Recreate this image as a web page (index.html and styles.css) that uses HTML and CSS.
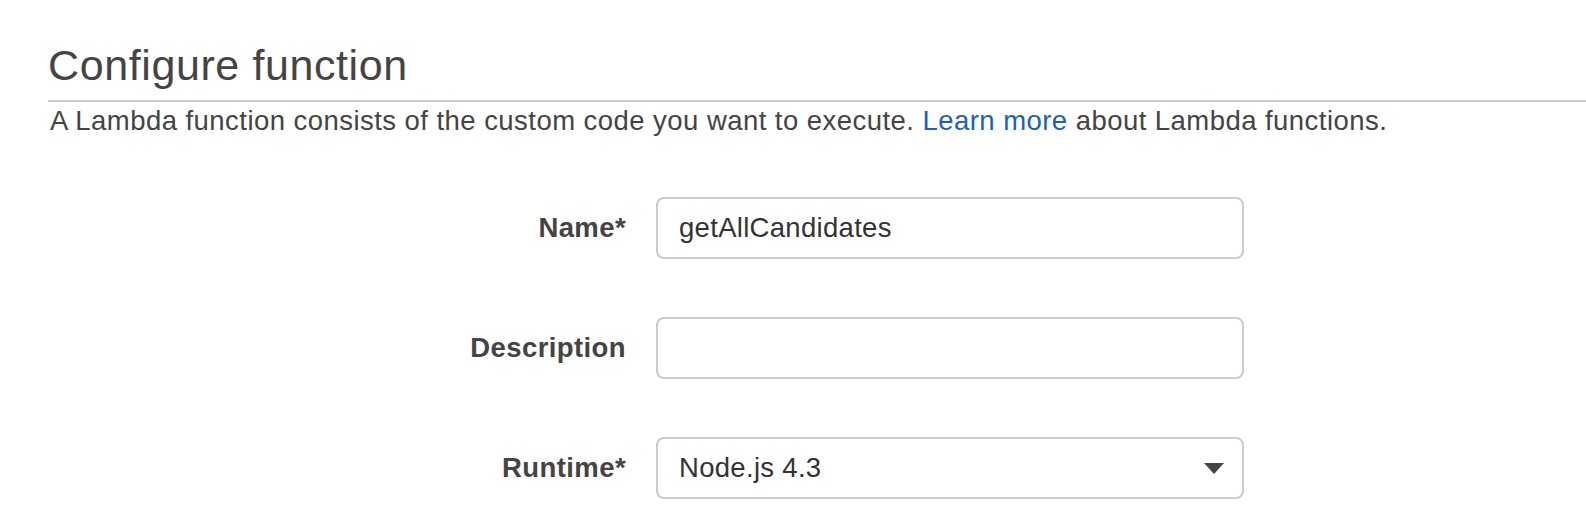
FILE: index.html
```html
<!DOCTYPE html>
<html lang="en">
<head>
<meta charset="utf-8">
<title>Configure function</title>
<link rel="stylesheet" href="styles.css">
</head>
<body>
<div class="page">
  <h1 class="title">Configure function</h1>
  <p class="intro">A Lambda function consists of the custom code you want to execute. <a class="link" href="#">Learn more</a> about Lambda functions.</p>
  <div class="form">
    <div class="label">Name*</div>
    <div class="field">getAllCandidates</div>

    <div class="label">Description</div>
    <div class="field"></div>

    <div class="label">Runtime*</div>
    <div class="field select">
      <span>Node.js 4.3</span>
      <svg class="caret" width="20" height="11" viewBox="0 0 20 11"><path d="M0 0 H20 L10 11 Z" fill="#444"/></svg>
    </div>
  </div>
</div>
</body>
</html>
```

FILE: styles.css
```css
html, body {
  margin: 0;
  padding: 0;
  background: #ffffff;
}

.page {
  padding-left: 48px;
  font-family: "Liberation Sans", Arial, Helvetica, sans-serif;
  color: #444444;
}

.title {
  margin: 41px 0 0 0;
  padding: 0 0 11px 0;
  font-size: 43px;
  line-height: 48px;
  font-weight: normal;
  letter-spacing: 0.6px;
  color: #444444;
  border-bottom: 2px solid #cccccc;
}

.intro {
  margin: 3px 0 0 2px;
  font-size: 27.5px;
  line-height: 32px;
  letter-spacing: 0.45px;
  color: #444444;
}

.link {
  color: #1b61b5;
  text-decoration: none;
}

.form {
  display: grid;
  grid-template-columns: 578px 588px;
  column-gap: 30px;
  row-gap: 58px;
  margin-top: 60px;
  align-items: center;
}

.label {
  text-align: right;
  font-size: 27.5px;
  font-weight: bold;
  letter-spacing: 0.4px;
  color: #444444;
}

.field {
  box-sizing: border-box;
  height: 62px;
  border: 2px solid #cccccc;
  border-radius: 8px;
  padding: 0 18px 0 21px;
  display: flex;
  align-items: center;
  font-size: 27.5px;
  letter-spacing: 0.3px;
  color: #333333;
}

.select {
  justify-content: space-between;
}

.caret {
  display: block;
  margin-top: 1px;
}
```
